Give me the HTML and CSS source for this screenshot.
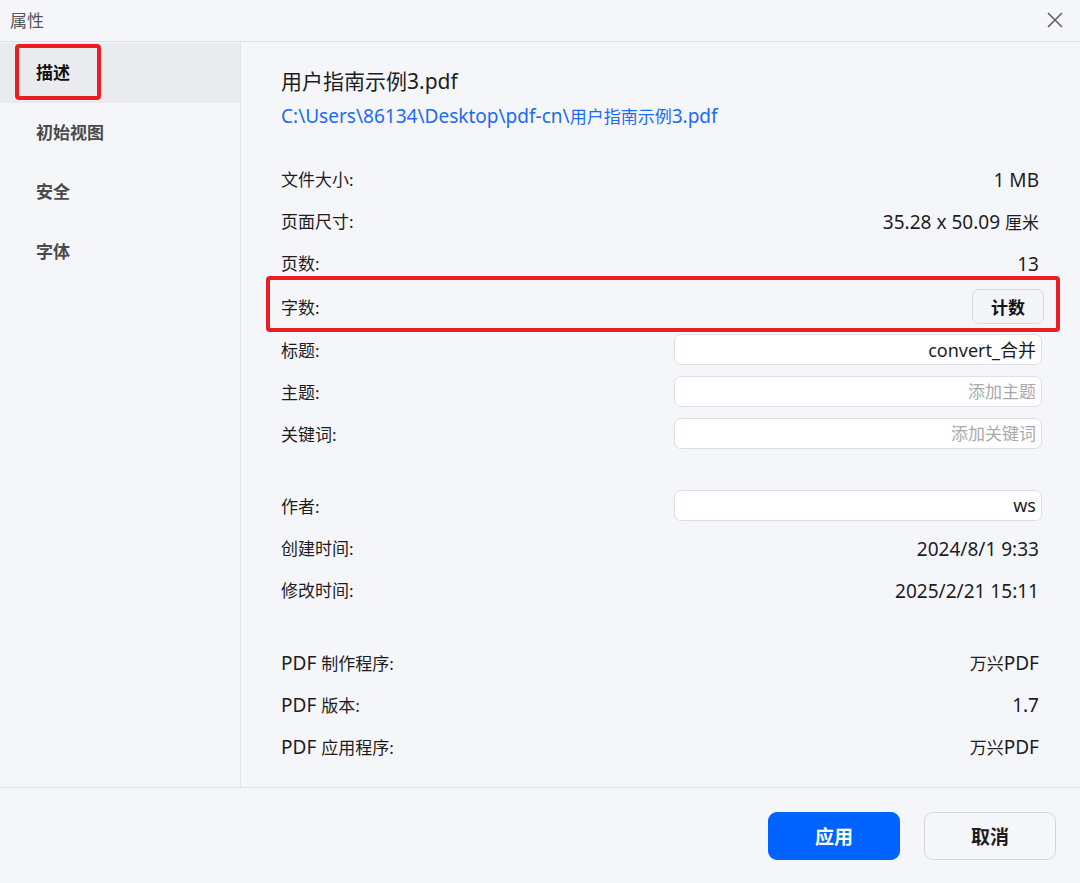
FILE: index.html
```html
<!DOCTYPE html>
<html lang="zh-CN">
<head>
    <meta charset="UTF-8">
    <title>属性</title>
    <link rel="stylesheet" href="styles.css">
</head>
<body>
    <div class="window">
        <div class="titlebar">
            <span class="title">属性</span>
            <svg class="close" width="16" height="16" viewBox="0 0 16 16">
                <path d="M1 1 L15 15 M15 1 L1 15" stroke="#5b5f6b" stroke-width="1.6" fill="none"/>
            </svg>
        </div>
        <div class="main">
            <div class="sidebar">
                <div class="nav-item active">描述<span class="mark mark-nav"></span></div>
                <div class="nav-item">初始视图</div>
                <div class="nav-item">安全</div>
                <div class="nav-item">字体</div>
            </div>
            <div class="content">
                <div class="file-name">用户指南示例<span class="lat">3.pdf</span></div>
                <div class="file-path"><span class="lat">C:\Users\86134\Desktop\pdf-cn\</span>用户指南示例<span class="lat">3.pdf</span></div>

                <div class="group first">
                    <div class="row"><span>文件大小:</span><span class="val lat">1 MB</span></div>
                    <div class="row"><span>页面尺寸:</span><span class="val"><span class="lat">35.28 x 50.09 </span>厘米</span></div>
                    <div class="row"><span>页数:</span><span class="val lat">13</span></div>
                    <div class="row tall"><span>字数:</span><button class="count">计数</button><span class="mark mark-row"></span></div>
                    <div class="row"><span>标题:</span><input class="field" type="text" value="convert_合并"></div>
                    <div class="row"><span>主题:</span><input class="field" type="text" placeholder="添加主题"></div>
                    <div class="row"><span>关键词:</span><input class="field" type="text" placeholder="添加关键词"></div>
                </div>

                <div class="group">
                    <div class="row"><span>作者:</span><input class="field" type="text" value="ws"></div>
                    <div class="row"><span>创建时间:</span><span class="val lat">2024/8/1 9:33</span></div>
                    <div class="row"><span>修改时间:</span><span class="val lat">2025/2/21 15:11</span></div>
                </div>

                <div class="group">
                    <div class="row"><span><span class="lat">PDF </span>制作程序:</span><span class="val">万兴<span class="lat">PDF</span></span></div>
                    <div class="row"><span><span class="lat">PDF </span>版本:</span><span class="val lat">1.7</span></div>
                    <div class="row"><span><span class="lat">PDF </span>应用程序:</span><span class="val">万兴<span class="lat">PDF</span></span></div>
                </div>
            </div>
        </div>
        <div class="footer">
            <button class="btn primary">应用</button>
            <button class="btn">取消</button>
        </div>
    </div>
</body>
</html>
```

FILE: styles.css
```css
* {
    box-sizing: border-box;
}
body {
    margin: 0;
    background-color: #f5f6fa;
    font-family: "Noto Sans", "Noto Sans CJK SC", sans-serif;
    color: #1d1d1f;
}
.window {
    width: 1080px;
    height: 883px;
    display: flex;
    flex-direction: column;
}
.titlebar {
    height: 42px;
    flex: none;
    display: flex;
    align-items: center;
    justify-content: space-between;
    padding: 0 17px 2px 10px;
    border-bottom: 1px solid #dfe0e4;
}
.title {
    font-size: 17px;
    color: #555;
}
.main {
    flex: 1;
    display: flex;
    min-height: 0;
}
.sidebar {
    width: 241px;
    flex: none;
    border-right: 1px solid #e3e4e8;
    padding-top: 1px;
}
.nav-item {
    position: relative;
    height: 59.5px;
    display: flex;
    align-items: center;
    padding: 0 0 2px 36px;
    font-size: 17px;
    font-weight: 700;
    color: #4a4a4a;
}
.nav-item.active {
    background-color: #e9ebef;
    color: #111;
}
.mark {
    position: absolute;
    border: 4px solid #ec1c24;
    border-radius: 4px;
}
.mark-nav {
    left: 15px;
    top: 1px;
    width: 86px;
    height: 56px;
}
.content {
    flex: 1;
    padding: 24px 38px 0 40px;
    font-size: 17px;
}
/* latin runs are drawn a bit larger, like the cjk ui font does */
.lat {
    font-size: 1.12em;
}
.file-name {
    font-size: 21px;
    line-height: 30px;
}
.file-name .lat {
    font-size: 1em;
}
.file-path {
    margin-top: 7px;
    line-height: 26px;
    color: #1a6cf2;
}
.group {
    margin-top: 30px;
}
.group.first {
    margin-top: 29px;
}
.row {
    position: relative;
    height: 42px;
    display: flex;
    align-items: center;
    justify-content: space-between;
    line-height: 24px;
}
.row.tall {
    height: 45px;
}
.val {
    padding-right: 3px;
}
.mark-row {
    left: -15px;
    right: -18px;
    top: -9px;
    bottom: -2px;
}
.count {
    width: 72px;
    height: 35px;
    margin-right: -2px;
    margin-top: -3px;
    font-family: inherit;
    font-size: 17px;
    font-weight: 700;
    color: #111;
    background-color: #f3f4f7;
    border: 1px solid #d9dadd;
    border-radius: 7px;
}
.field {
    width: 368px;
    height: 31px;
    margin-top: -4px;
    padding: 0 5px;
    font-family: inherit;
    font-size: 18px;
    color: #1d1d1f;
    text-align: right;
    background-color: #fff;
    border: 1px solid #dedfe3;
    border-radius: 7px;
    outline: none;
}
.field::placeholder {
    color: #a9a9ad;
    font-size: 17px;
}
.footer {
    height: 96px;
    flex: none;
    display: flex;
    align-items: center;
    justify-content: flex-end;
    gap: 24px;
    padding-right: 24px;
    border-top: 1px solid #dfe0e4;
}
.btn {
    width: 132px;
    height: 48px;
    font-family: inherit;
    font-size: 19px;
    font-weight: 700;
    color: #1d1d1f;
    background-color: #f5f6fa;
    border: 1px solid #d5d6da;
    border-radius: 9px;
}
.btn.primary {
    color: #fff;
    background-color: #0062ff;
    border-color: #0062ff;
}
```
